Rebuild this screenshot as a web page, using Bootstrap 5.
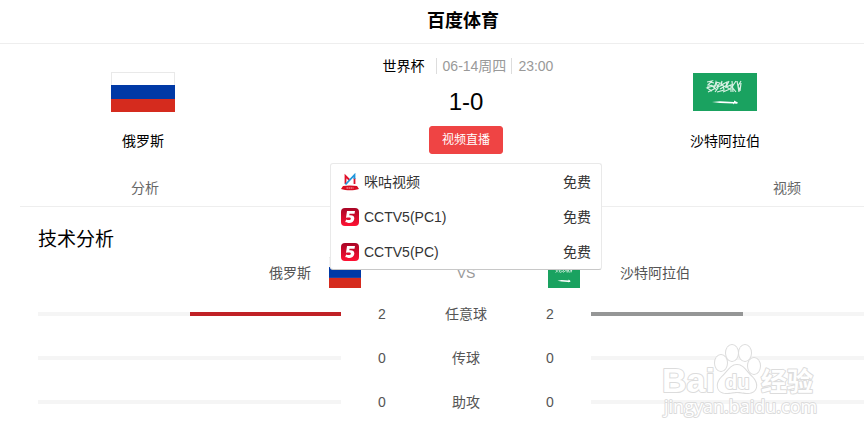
<!DOCTYPE html>
<html lang="zh-CN">
<head>
<meta charset="utf-8">
<meta name="viewport" content="width=device-width, initial-scale=1">
<title>百度体育</title>
<link href="https://cdn.jsdelivr.net/npm/bootstrap@5.3.0/dist/css/bootstrap.min.css" rel="stylesheet">
<style>
body{font-family:"Liberation Sans","Noto Sans CJK SC",sans-serif;font-size:14px;line-height:20px;color:#000;background:#fff}
/* the sheet is wider than the window and runs off its right edge */
.sheet{margin-left:20px;margin-right:-48px}
.site-head{border-bottom:1px solid #eee;height:44px}
.site-name{font-size:18px;line-height:43px;font-weight:700;text-align:center;margin:0;padding-right:6px}
.trio{display:grid;grid-template-columns:246px 1fr 246px}
.team{width:118px;padding-top:28px}
.trio>:first-child .team{width:246px}
.team svg{width:64px;height:40px}
.team svg.flag-low{height:38px;margin:1px 0}
.team-name{margin-top:19px}
.meta{padding-top:12px}
.meta time{color:#999}
.meta .sep{border-left:1px solid #ddd;line-height:16px;padding-left:6px}
.league{margin-right:11px}
.when{margin-right:5px}
.score{font-size:24px;line-height:32px;margin-top:10px}
.live{--bs-btn-bg:#ef4444;--bs-btn-border-color:#ef4444;--bs-btn-color:#fff;--bs-btn-hover-bg:#dc3636;--bs-btn-hover-color:#fff;font-size:12px;line-height:18px;padding:4px 12px;border-radius:3px}
.sources{top:100%;left:50%;transform:translateX(-50%);margin-top:9px;width:272px;padding:0;border:1px solid #e9e9e9;border-bottom-color:#c8c8c8;border-radius:3px;background:#fff;z-index:5}
.sources a{display:flex;align-items:center;height:35px;padding:0 10px;color:#333;text-decoration:none}
.sources svg{width:18px;height:18px;margin-right:5px}
.tabs{border-bottom:1px solid #eee;padding:24px 0 8px}
.tabs a{color:#666;text-decoration:none;text-align:center;width:250px}
.stats{padding:0 18px;color:#555}
.stats h2{font-size:19px;line-height:28px;color:#000;margin:19px 0 3px;font-weight:400}
.stats table{width:100%;table-layout:fixed}
.stats td,.stats th{padding:0;height:44px;font-weight:400;text-align:center}
.stats thead th{height:35px;padding-bottom:4px}
.stats thead svg{width:32px;height:31px;display:block}
.stats .versus{color:#999}
.c-val{width:82px}
.c-label{width:86px}
.side-home{padding-right:62px;gap:18px}
.side-away{padding-left:39px;gap:40px}
.bar{height:4px;border-radius:0;background:#f5f5f5}
.bar .progress-bar.home{background:#c02126}
.bar .progress-bar.away{background:#959696}
.brand{position:absolute;right:44px;top:340px;width:160px;height:80px;pointer-events:none}
.brand text,.brand path,.brand ellipse{fill:#fff;stroke:#dcdcdc;stroke-width:2;paint-order:stroke;stroke-linejoin:round}
</style>
<script src="https://cdn.jsdelivr.net/npm/bootstrap@5.3.0/dist/js/bootstrap.bundle.min.js"></script>
</head>
<body>
<div class="position-relative overflow-hidden min-vh-100">
<svg width="0" height="0" class="position-absolute" aria-hidden="true">
  <defs>
    <linearGradient id="redfade" x1="0" y1="0" x2="0" y2="1"><stop offset="0" stop-color="#a80526"/><stop offset="1" stop-color="#ff1233"/></linearGradient>
    <symbol id="flag-ru" viewBox="0 0 64 40" preserveAspectRatio="none">
      <path fill="#e9e9e9" d="M0 0h64v40H0z"/><path fill="#fff" d="M1 1h62v13H1z"/><path fill="#0039a6" d="M0 13h64v14H0z"/><path fill="#d52b1e" d="M0 27h64v13H0z"/>
    </symbol>
    <symbol id="flag-sa" viewBox="0 0 64 38" preserveAspectRatio="none">
      <path fill="#1aa260" d="M0 0h64v38H0z"/>
      <g fill="none" stroke="#d6f0e2" stroke-width="1.200">
        <path d="M14 9l5-1-4 4 5 1-6 2 5 3M15 19l6-3 2-7 2 6-3 4M23 9l4 1-3 4 6-2 1 5-7 2M29 8l-1 4 6-3-1 5 4 2-7 3M36 8l-3 6 5-2 0 7M39 8l1 11M43 8l-4 6 4 5M44 8l2 11M48 8l-3 5 2 4M48 10l-1 8M17 9l4 1M14 14l9-1M27 16l7-4M18 12l6 5"/>
      </g>
      <path fill="#fff" d="M19 29l8-.8 14 .7v-1.400l3 1.400 1 .8-1 1-3-.2v1l-1-1-13-.4z"/>
    </symbol>
    <symbol id="cctv5" viewBox="0 0 18 18">
      <rect width="18" height="18" rx="4" fill="url(#redfade)"/>
      <path fill="#fff" d="M6 3h8l-.5 2.800H8.500l-.2 1.500c3-.5 5.300.6 5 3.400-.3 3-2.800 4.400-5.700 4.200-1.400 0-2.600-.4-3.400-.9l1-2.600c1.800 1 4.400 1.100 4.600-.7.200-1.600-2-1.500-4.800-.9z"/>
    </symbol>
  </defs>
</svg>

<header class="site-head"><div class="sheet"><h1 class="site-name">百度体育</h1></div></header>

<main class="sheet">
  <section class="trio text-center">
    <div><div class="team">
      <svg role="img" aria-label="俄罗斯国旗"><use href="#flag-ru"/></svg>
      <div class="team-name">俄罗斯</div>
    </div></div>
    <div>
      <div class="meta d-flex justify-content-center align-items-center ps-1">
        <span class="league">世界杯</span><time class="sep when">06-14周四</time><time class="sep">23:00</time>
      </div>
      <div class="score">1-0</div>
      <div class="position-relative d-inline-block mt-2">
        <button type="button" class="btn live d-block" aria-expanded="true" aria-controls="sources">视频直播</button>
        <ul id="sources" class="sources list-unstyled position-absolute mb-0">
          <li><a href="#"><svg viewBox="0 0 18 18" aria-hidden="true">
            <path fill="none" stroke="#e0102a" stroke-width="1.800" d="M4.500 11V3l4 4M13.500 5v6"/><path fill="none" stroke="#2196dc" stroke-width="1.800" d="M4.500 11.500L13.500 2v4"/>
            <path fill="#d80c22" d="M2 13c4-.8 10-.8 14 0l2 3c-5 1.800-13 1.800-18 0z"/><path stroke="#f6b5bd" stroke-width="1.200" stroke-dasharray="1.500 .5" d="M5.500 15h7"/></svg>咪咕视频<span class="ms-auto">免费</span></a></li>
          <li><a href="#"><svg aria-hidden="true"><use href="#cctv5"/></svg>CCTV5(PC1)<span class="ms-auto">免费</span></a></li>
          <li><a href="#"><svg aria-hidden="true"><use href="#cctv5"/></svg>CCTV5(PC)<span class="ms-auto">免费</span></a></li>
        </ul>
      </div>
    </div>
    <div><div class="team">
      <svg class="flag-low" role="img" aria-label="沙特阿拉伯国旗"><use href="#flag-sa"/></svg>
      <div class="team-name">沙特阿拉伯</div>
    </div></div>
  </section>

  <nav class="tabs d-flex justify-content-between">
    <a href="#stats">分析</a>
    <a href="#video">视频</a>
  </nav>

  <section id="stats" class="stats">
    <h2>技术分析</h2>
    <table>
      <colgroup><col><col class="c-val"><col class="c-label"><col class="c-val"><col></colgroup>
      <thead>
        <tr>
          <th colspan="2" scope="col"><div class="d-flex align-items-center justify-content-end side-home">俄罗斯<svg aria-hidden="true"><use href="#flag-ru"/></svg></div></th>
          <th scope="col" class="versus">VS</th>
          <th colspan="2" scope="col"><div class="d-flex align-items-center side-away"><svg aria-hidden="true"><use href="#flag-sa"/></svg>沙特阿拉伯</div></th>
        </tr>
      </thead>
      <tbody>
        <tr><td><div class="progress bar justify-content-end"><div class="progress-bar home" style="width:50%"></div></div></td><td>2</td><th scope="row">任意球</th><td>2</td><td><div class="progress bar"><div class="progress-bar away" style="width:50%"></div></div></td></tr>
        <tr><td><div class="progress bar"></div></td><td>0</td><th scope="row">传球</th><td>0</td><td><div class="progress bar"></div></td></tr>
        <tr><td><div class="progress bar"></div></td><td>0</td><th scope="row">助攻</th><td>0</td><td><div class="progress bar"></div></td></tr>
      </tbody>
    </table>
  </section>
</main>

<svg class="brand" viewBox="0 0 160 80" role="img" aria-label="Baidu 经验">
  <g font-family="Liberation Sans" font-weight="700">
    <text x="2" y="52" font-size="34">Bai</text>
    <ellipse cx="61" cy="23" rx="6" ry="8"/><ellipse cx="72" cy="13" rx="6" ry="8"/><ellipse cx="85" cy="13" rx="6" ry="8"/><ellipse cx="94" cy="26" rx="6" ry="8"/>
    <path d="M77 25c7 0 9 7 15 12 7 7 5 16-4 16-5 0-7-1-11-1s-6 1-11 1c-9 0-11-9-4-16 6-5 8-12 15-12z"/>
    <text x="65" y="49" font-size="20">du</text>
  </g>
  <text x="101" y="51" font-size="26" font-family="Noto Sans CJK SC" font-weight="700">经验</text>
  <text x="4" y="73" font-size="18" font-family="Open Sans, sans-serif" font-weight="400">jingyan.baidu.com</text>
</svg>
</div>
</body>
</html>
